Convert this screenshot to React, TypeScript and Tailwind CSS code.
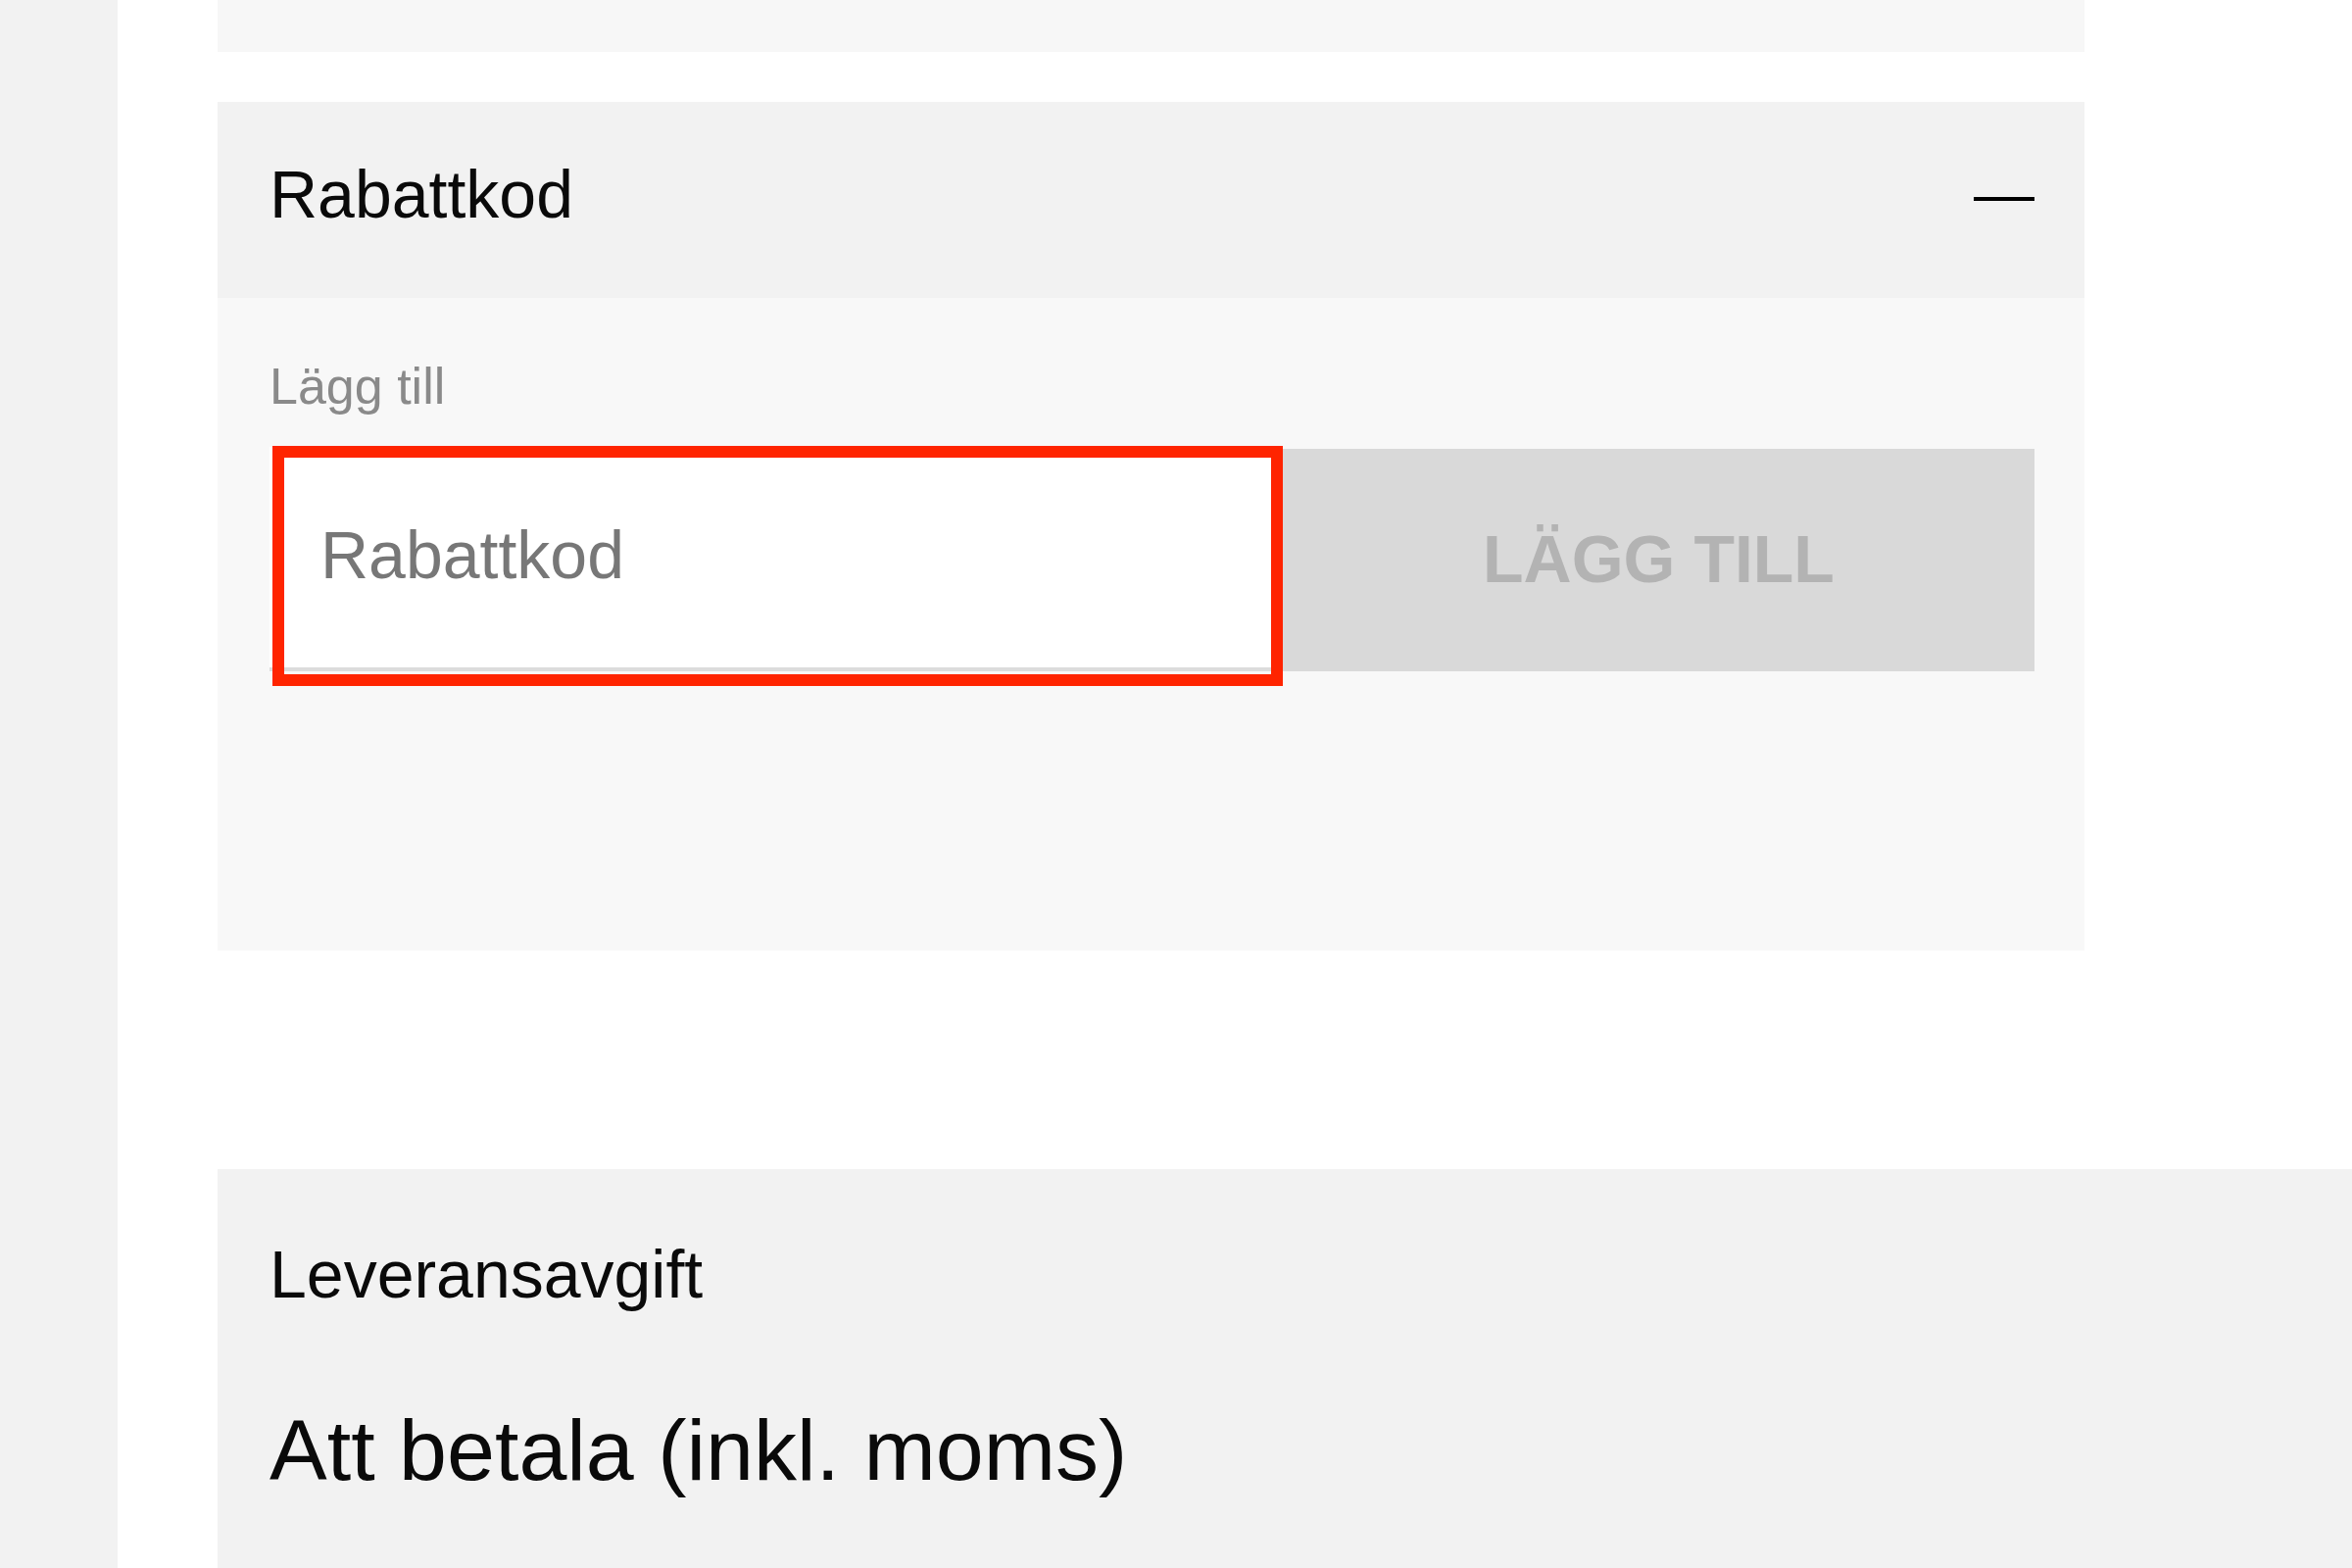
import React from "react";

export default function App() {
  const font = { fontFamily: '"Liberation Sans", Arial, sans-serif' };
  return (
    <div className="flex w-[2400px] h-[1600px] overflow-hidden bg-white" style={font}>
      <div className="w-[120px] shrink-0 bg-[#f2f2f2]" />
      <div className="flex-1 flex flex-col pl-[102px] bg-white">
        {/* previous card remnant */}
        <div className="w-[1905px] h-[53px] bg-[#f7f7f7]" />
        {/* Rabattkod accordion */}
        <div className="mt-[51px] w-[1905px]">
          <div className="h-[200px] bg-[#f2f2f2] pl-[53px] pr-[51px] pt-[60px] flex items-start justify-between">
            <span className="text-[68px] leading-none text-[#0a0a0a]">Rabattkod</span>
            <span className="mt-[37px] block w-[62px] h-[4px] bg-black" />
          </div>
          <div className="h-[666px] bg-[#f8f8f8] pl-[53px] pr-[51px] pt-[64px]">
            <div className="text-[52px] leading-none text-[#8a8a8a]">Lägg till</div>
            <div className="mt-[36px] flex">
              <div className="relative w-[1034px] h-[229px]">
                <input
                  placeholder="Rabattkod"
                  className="w-full h-full bg-white border-b-[4px] border-[#dcdcdc] pl-[52px] pb-[6px] text-[68px] text-[#777] placeholder:text-[#777] outline-none"
                  style={font}
                />
                <div className="absolute left-[3px] top-[-1px] w-[1031px] h-[245px] border-[12px] border-[#ff2400] pointer-events-none" />
              </div>
              <button
                className="mt-[2px] w-[767px] h-[227px] bg-[#d9d9d9] pb-[4px] text-[68px] font-bold text-[#b3b3b3] leading-none"
                style={font}
              >
                LÄGG TILL
              </button>
            </div>
          </div>
        </div>
        {/* Summary */}
        <div className="mt-[223px] flex-1 bg-[#f2f2f2] pl-[53px] pt-[73px]">
          <div className="text-[68px] leading-none text-[#0a0a0a]">Leveransavgift</div>
          <div className="mt-[102px] text-[88px] leading-none text-[#0a0a0a]">Att betala (inkl. moms)</div>
        </div>
      </div>
    </div>
  );
}
